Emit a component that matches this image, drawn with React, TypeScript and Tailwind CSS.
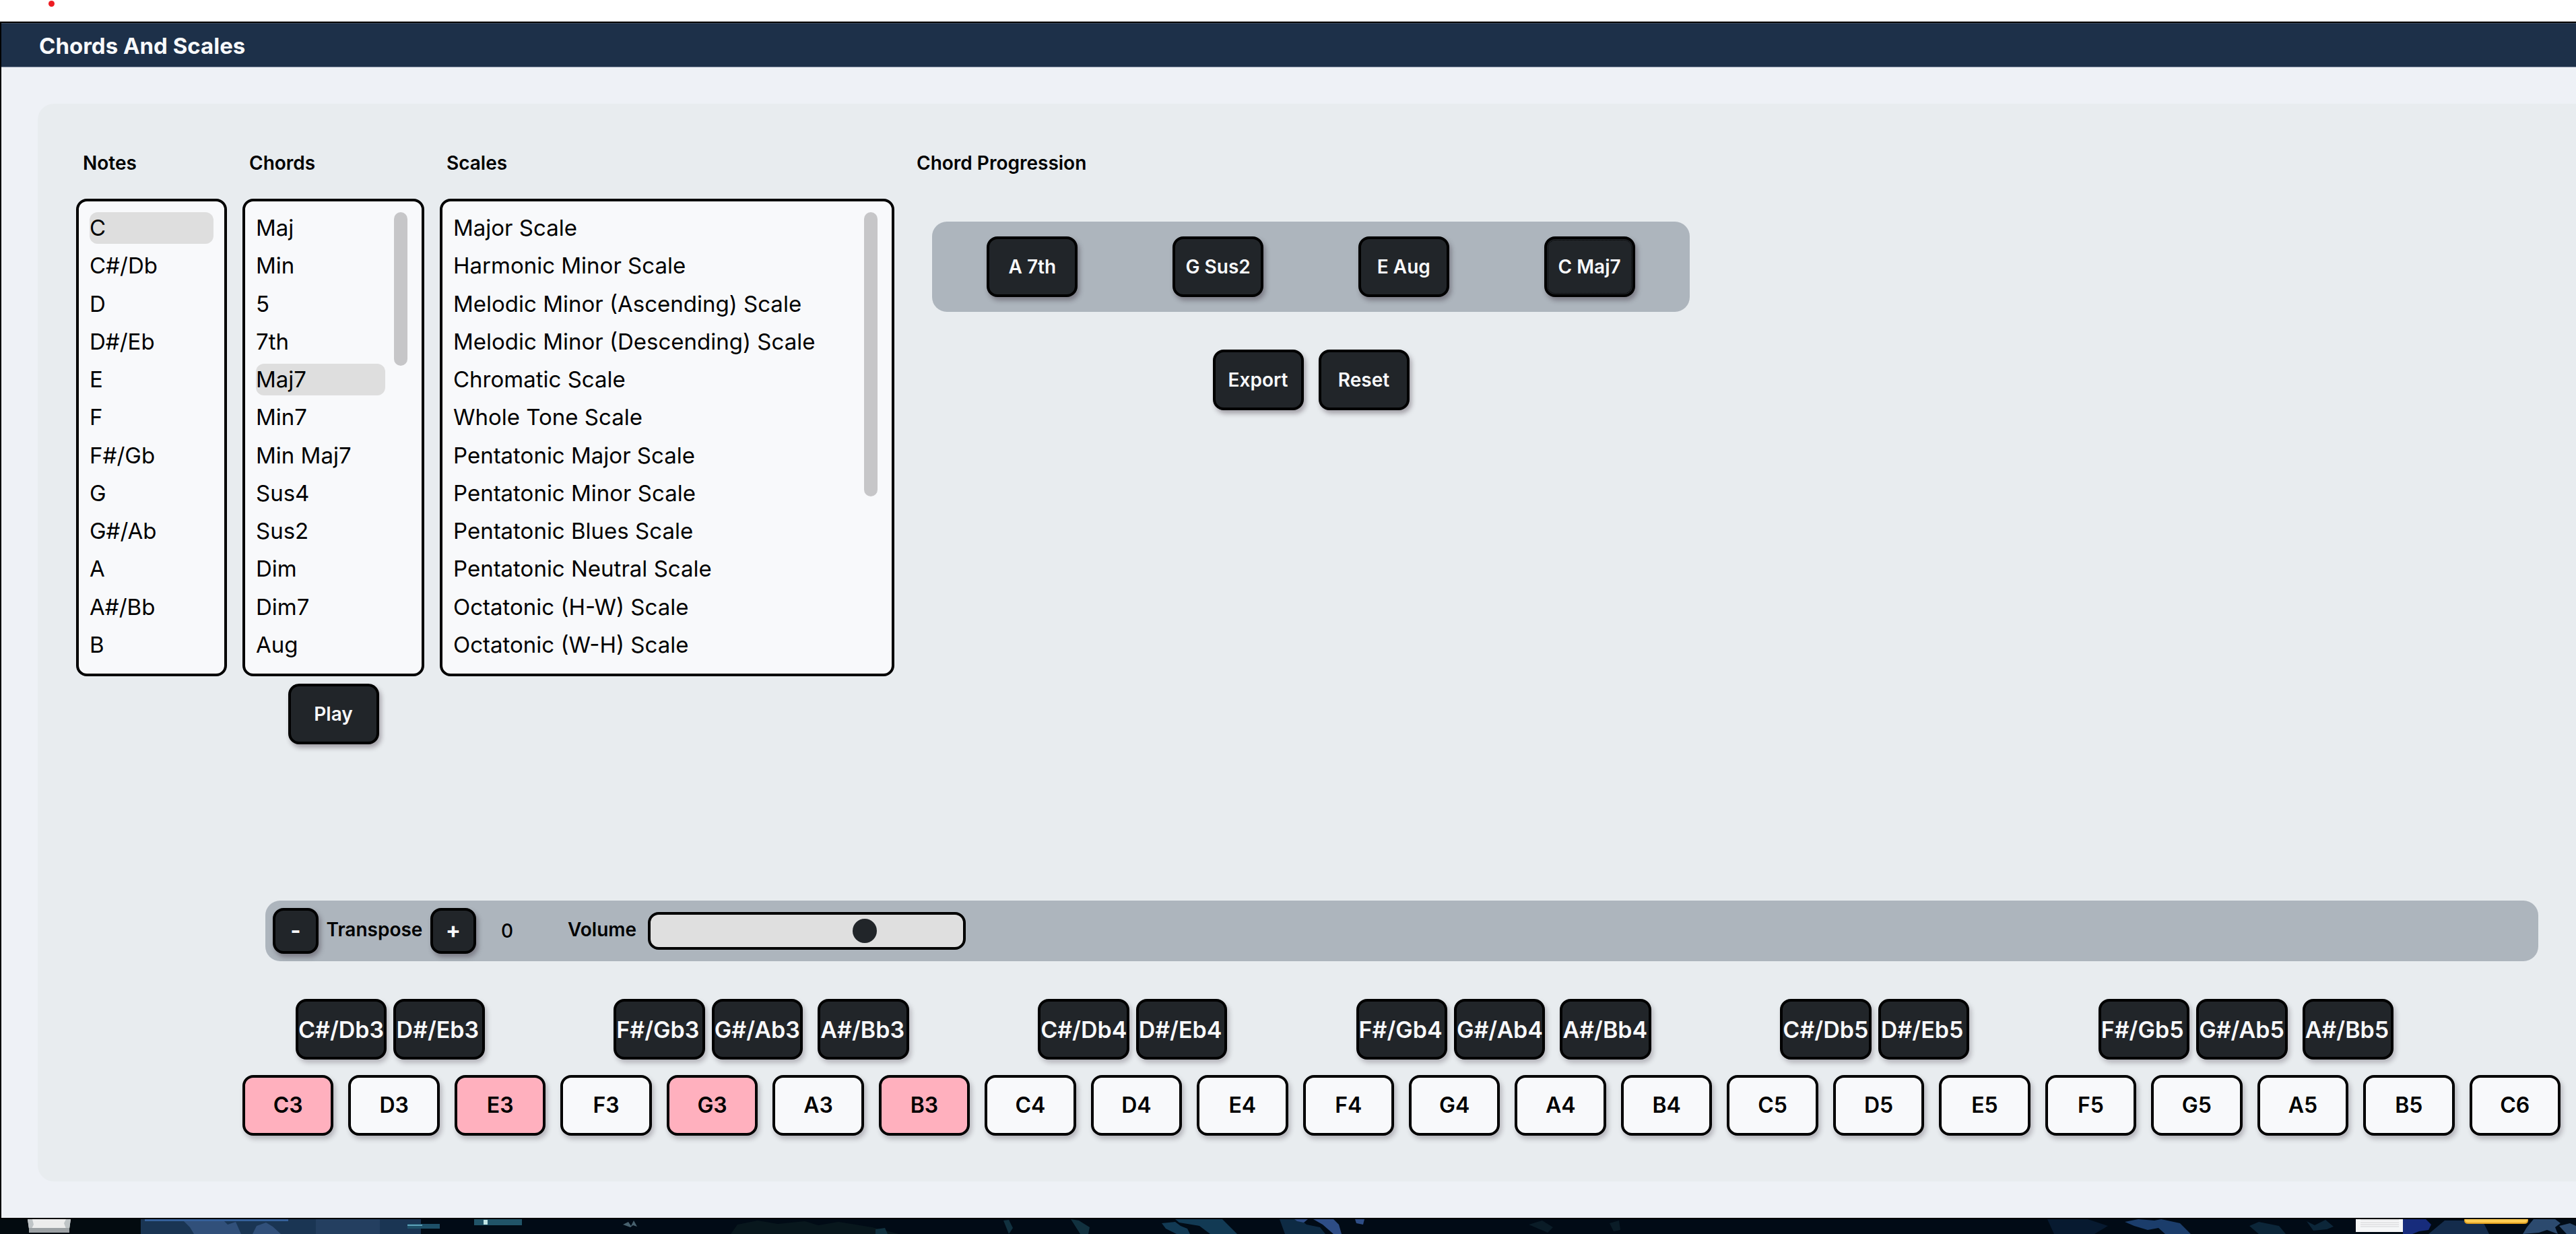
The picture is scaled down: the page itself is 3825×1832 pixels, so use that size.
import { useState } from "react";

const NOTES = ["C", "C#/Db", "D", "D#/Eb", "E", "F", "F#/Gb", "G", "G#/Ab", "A", "A#/Bb", "B"];
const CHORDS = ["Maj", "Min", "5", "7th", "Maj7", "Min7", "Min Maj7", "Sus4", "Sus2", "Dim", "Dim7", "Aug"];
const SCALES = [
  "Major Scale",
  "Harmonic Minor Scale",
  "Melodic Minor (Ascending) Scale",
  "Melodic Minor (Descending) Scale",
  "Chromatic Scale",
  "Whole Tone Scale",
  "Pentatonic Major Scale",
  "Pentatonic Minor Scale",
  "Pentatonic Blues Scale",
  "Pentatonic Neutral Scale",
  "Octatonic (H-W) Scale",
  "Octatonic (W-H) Scale",
];
const PROGRESSION = ["A 7th", "G Sus2", "E Aug", "C Maj7"];

const OCTAVES = [3, 4, 5];
const WHITE_KEYS = [...OCTAVES.flatMap((o) => ["C", "D", "E", "F", "G", "A", "B"].map((n) => n + o)), "C6"];
const SHARP_OF: Record<string, string> = { C: "C#/Db", D: "D#/Eb", F: "F#/Gb", G: "G#/Ab", A: "A#/Bb" };
const PRESSED = ["C3", "E3", "G3", "B3"];

type ListProps = {
  title: string;
  items: string[];
  initial?: string;
  width: string;
  thumb?: string;
  children?: React.ReactNode;
};

function PickList({ title, items, initial, width, thumb, children }: ListProps) {
  const [selected, setSelected] = useState(initial);
  return (
    <section className={"flex shrink-0 flex-col " + width}>
      <h2 className="pl-[10px] text-[28px] leading-[42px] font-semibold">{title}</h2>
      <div
        className={
          "mt-8 flex h-[709px] gap-[13px] rounded-2xl border-4 border-black bg-[#f8f9fb] pt-4 pb-[19px] pl-4 " +
          (thumb ? "pr-[21px]" : "pr-4")
        }
      >
        <ul className="flex flex-1 flex-col justify-between" aria-label={title}>
          {items.map((item) => (
            <li key={item}>
              <button
                type="button"
                aria-pressed={item === selected}
                onClick={() => setSelected(item)}
                className={
                  "block w-full rounded-xl text-left text-[33px] leading-[47px] whitespace-nowrap " +
                  (item === selected ? "bg-[#dedede]" : "")
                }
              >
                {item}
              </button>
            </li>
          ))}
        </ul>
        {thumb && <div className={"w-5 shrink-0 rounded-full bg-[#c6c6c8] " + thumb} />}
      </div>
      {children}
    </section>
  );
}

type ActionProps = { label: string; size?: string; focused?: boolean; name?: string };

function ActionButton({ label, size = "h-[90px] w-[135px] text-[28px] font-semibold", focused, name }: ActionProps) {
  return (
    <button
      type="button"
      aria-label={name}
      className={
        "shrink-0 rounded-2xl border-4 border-black bg-[#212529] whitespace-nowrap text-[#f8f9fb] shadow-[3px_5px_7px_rgba(33,20,35,0.35)] " +
        size +
        (focused ? " outline-1 -outline-offset-6 outline-black outline-dotted" : "")
      }
    >
      {label}
    </button>
  );
}

function BlackKey({ note, offset }: { note: string; offset: string }) {
  return (
    <button
      type="button"
      className={
        "flex h-[90px] w-full items-center overflow-hidden rounded-2xl border-4 border-black bg-[#212529] text-[34px] font-semibold whitespace-nowrap text-[#f8f9fb] shadow-[3px_5px_7px_rgba(33,20,35,0.25)] " +
        offset
      }
    >
      {note}
    </button>
  );
}

function Keyboard() {
  return (
    <div className="mt-14 mr-[23px] ml-[304px] grid grid-cols-22 gap-x-[22px] gap-y-[23px]">
      {WHITE_KEYS.map((key) => {
        const sharp = key === "C6" ? undefined : SHARP_OF[key[0]];
        return (
          <div key={key} className="h-[90px]">
            {sharp && (
              <BlackKey
                note={sharp + key[1]}
                offset={key[0] === "C" || key[0] === "F" ? "ml-[79px]" : "ml-[67px]"}
              />
            )}
          </div>
        );
      })}
      {WHITE_KEYS.map((key) => (
        <button
          key={key}
          type="button"
          className={
            "h-[90px] rounded-2xl border-4 border-black text-[32px] font-semibold shadow-[3px_5px_7px_rgba(33,20,35,0.25)] " +
            (PRESSED.includes(key) ? "bg-[#ffb0be]" : "bg-[#f8f9fb]")
          }
        >
          {key}
        </button>
      ))}
    </div>
  );
}

function Controls() {
  const [volume, setVolume] = useState(70);
  return (
    <div className="mt-[232px] mr-14 ml-[338px] flex h-[90px] items-center rounded-[22px] bg-[#adb5bd] px-[11px] text-[28px] font-semibold">
      <ActionButton label="-" name="Transpose down" size="size-[68px] text-[33px] font-bold" />
      <span className="w-[166px] pb-1 text-center">Transpose</span>
      <ActionButton label="+" name="Transpose up" size="size-[68px] text-[33px] font-bold" />
      <output className="w-[92px] text-center font-medium">0</output>
      <label htmlFor="volume" className="ml-[44px] w-[108px] pb-1">
        Volume
      </label>
      <input
        id="volume"
        type="range"
        value={volume}
        onChange={(e) => setVolume(Number(e.target.value))}
        className="ml-[11px] h-14 w-[472px] appearance-none rounded-2xl border-4 border-black bg-[#dfdfdf] [&::-webkit-slider-thumb]:size-9 [&::-webkit-slider-thumb]:appearance-none [&::-webkit-slider-thumb]:rounded-full [&::-webkit-slider-thumb]:bg-[#212529]"
      />
    </div>
  );
}

function Wallpaper() {
  return (
    <svg className="block h-[22px] w-full" viewBox="0 0 3825 22" preserveAspectRatio="none" aria-hidden="true">
      <rect width="3825" height="22" fill="#010b16" />
      <rect width="209" height="22" fill="#030b10" />
      <rect x="209" width="416" height="22" fill="#1a3553" />
      <path d="M270 0h60l8 8 12-4 8 18h-70l-6-10z" fill="#31507a" />
      <path d="M375 22l6-12 14-5 10 6 12 11z" fill="#31507a" />
      <rect x="469" width="95" height="22" fill="#243f60" />
      <rect x="215" width="213" height="3" fill="#35609a" />
      <rect x="605" y="7" width="48" height="7" fill="#1e5068" />
      <rect x="605" y="8" width="22" height="2" fill="#5da0b8" />
      <rect x="704" width="71" height="9" fill="#215468" />
      <rect x="718" y="1" width="6" height="7" fill="#bfe3e3" />
      <path d="M925 8l8-4 4 6 4-8 5 9-6-2-4 3z" fill="#48616e" />
      <path d="M1085 22l10-14 30-6 30 5 40-4 20 6 30-5 50 8 40 10z" fill="#08171d" />
      <path d="M1300 15l14-2 4 9h-18zM1490 2l8-1 6 12-6 9zM1590 0l12 2 16 10-2 10h-12z" fill="#11313f" />
      <path d="M1725 6l20-2 8 6 10 4 4 8h-20l-16-8zM1745 0h70l14 14 8 8h-40l-16-12-30-5z" fill="#123a54" />
      <path d="M1900 0h30l10 8 20 4 8 10h-60z" fill="#0e2b44" />
      <path d="M1922 0h20l-6 5-10-2zM1950 0h30l8 8 4 14h-12l-16-14zM2012 0h14l-2 8-10-2z" fill="#2e4d86" />
      <path d="M2270 8l20-6 16 10-8 8zM2390 6l14-4 2 14-10 2z" fill="#0a1c27" />
      <path d="M3040 0h60l30 10-20 12h-60z" fill="#071a30" />
      <path d="M3155 4l20-4 24 2 10-2 28 6 8 8 8 8h-38l-10-9-16 3-20-6z" fill="#1b3d6b" />
      <path d="M3340 10l14-6 30 6 10 12h-40zM3425 3l12 6 16-8 12 10-10 4-20 2z" fill="#0c2639" />
      <path d="M3568 0h34l8 8-4 8-14 2-10 4h-14z" fill="#172c7c" />
      <path d="M3630 2h56l10 20h-90z" fill="#142c4c" />
      <path d="M3746 22l6-10 10-12h32l8 6-8 6 4 10-16-6-12 4zM3800 10l16-4 9 4v12h-14z" fill="#2c4a6e" />
      <path d="M41 0h64l-2 14H43z" fill="#ececec" />
      <path d="M41 0h7l2 8-3 6h-4zM98 0h7l-2 14h-5l-3-8z" fill="#bfc4c6" />
      <path d="M43 13h60v7H43z" fill="#9ca1a4" />
      <rect x="3498" width="70" height="19" fill="#f5f6f7" />
      <path d="M3505 1h57M3505 5h57M3505 8h57M3505 11h57" stroke="#d2d3d5" strokeWidth="1" />
      <path d="M3659 0h95v2q0 5-6 5h-83q-6 0-6-5z" fill="#e0a020" />
      <path d="M3660 0h93q0 5-5 5h-83q-5 0-5-5z" fill="#ffcc52" />
    </svg>
  );
}

export default function App() {
  return (
    <div className="flex min-h-screen flex-col overflow-hidden bg-white font-['Inter',sans-serif] text-black">
      <div className="h-8 pt-px pl-[72px]">
        <div className="size-[9px] rounded-full bg-[#ee1c22]" />
      </div>

      <div className="flex-1 border-y-2 border-l-2 border-black bg-[#eef1f6] pb-[54px]">
        <header className="flex h-[66px] items-center border-t border-b border-t-[#3f4c5f] border-b-[#8a94a8] bg-[#1d3049] pt-1 pl-14">
          <h1 className="text-[33px] font-bold text-[#f8f9fb]">Chords And Scales</h1>
        </header>

        <main className="mt-[54px] ml-[54px] rounded-l-[24px] bg-[#e8ecef] pt-[67px] pb-[68px]">
          <div className="ml-[57px] flex items-start gap-[23px]">
            <PickList title="Notes" items={NOTES} initial="C" width="w-[224px]" />
            <PickList title="Chords" items={CHORDS} initial="Maj7" width="w-[270px]" thumb="h-[228px]">
              <div className="mt-[11px] flex h-[90px] justify-center">
                <ActionButton label="Play" />
              </div>
            </PickList>
            <PickList title="Scales" items={SCALES} width="w-[675px]" thumb="h-[422px]" />

            <section className="flex flex-col">
              <h2 className="pl-[10px] text-[28px] leading-[42px] font-semibold">Chord Progression</h2>
              <div className="mt-[66px] ml-[33px] flex w-[1125px] flex-col items-center gap-14">
                <div className="grid w-full grid-cols-4 justify-items-center rounded-[22px] bg-[#adb5bd] px-[11px] py-[22px]">
                  {PROGRESSION.map((chord) => (
                    <ActionButton key={chord} label={chord} focused={chord === "C Maj7"} />
                  ))}
                </div>
                <div className="flex gap-[22px]">
                  <ActionButton label="Export" />
                  <ActionButton label="Reset" />
                </div>
              </div>
            </section>
          </div>

          <Controls />
          <Keyboard />
        </main>
      </div>

      <Wallpaper />
    </div>
  );
}
